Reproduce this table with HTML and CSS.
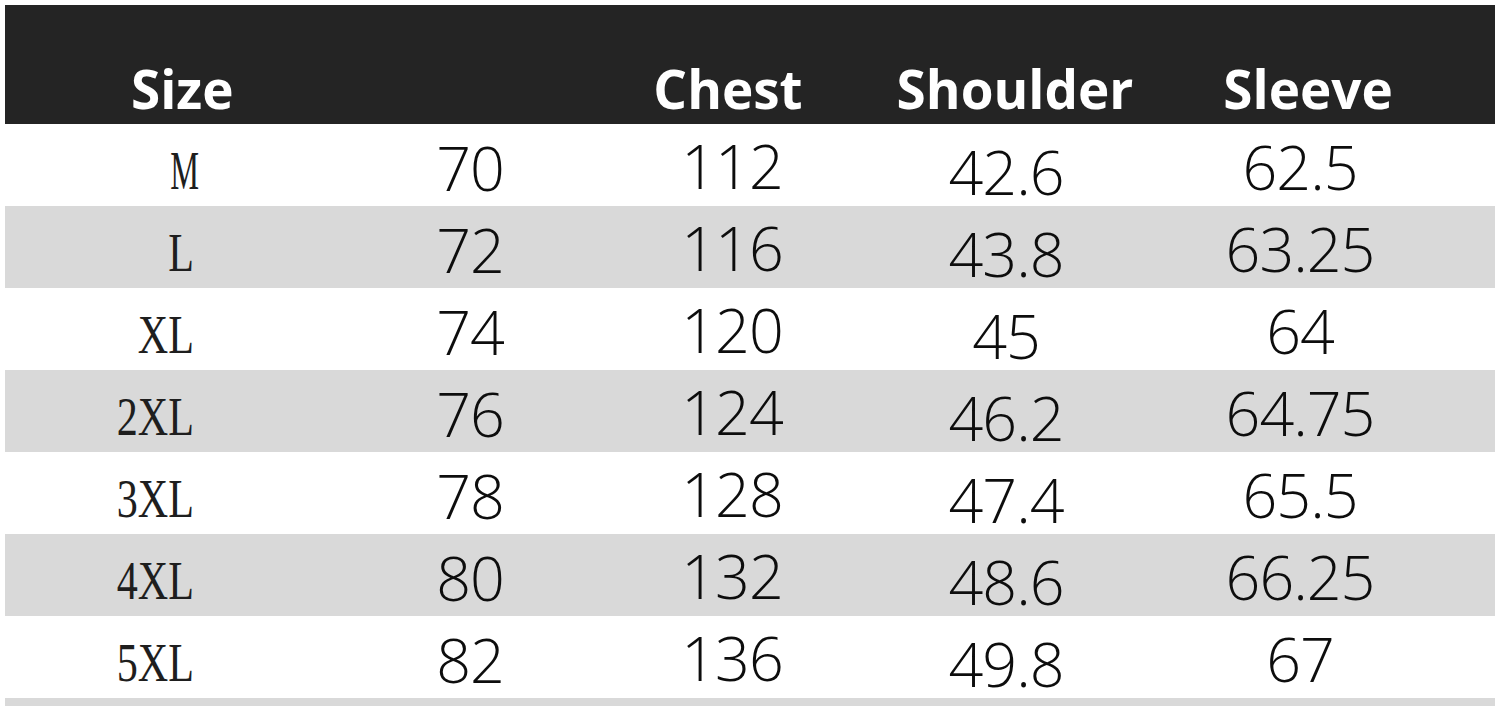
FILE: index.html
```html
<!DOCTYPE html>
<html lang="en">
<head>
<meta charset="utf-8">
<title>Size chart</title>
<link rel="stylesheet" href="styles.css">
</head>
<body>
<div class="chart">
  <div class="row head">
    <div class="h h-size">Size</div>
    <div class="h h-len"></div>
    <div class="h h-chest">Chest</div>
    <div class="h h-shoulder">Shoulder</div>
    <div class="h h-sleeve">Sleeve</div>
  </div>
  <div class="row">
    <div class="c size"><span class="narrow">M</span></div>
    <div class="c len">70</div>
    <div class="c chest">112</div>
    <div class="c shoulder">42.6</div>
    <div class="c sleeve">62.5</div>
  </div>
  <div class="row alt">
    <div class="c size"><span>L</span></div>
    <div class="c len">72</div>
    <div class="c chest">116</div>
    <div class="c shoulder">43.8</div>
    <div class="c sleeve">63.25</div>
  </div>
  <div class="row">
    <div class="c size"><span>XL</span></div>
    <div class="c len">74</div>
    <div class="c chest">120</div>
    <div class="c shoulder">45</div>
    <div class="c sleeve">64</div>
  </div>
  <div class="row alt">
    <div class="c size"><span>2XL</span></div>
    <div class="c len">76</div>
    <div class="c chest">124</div>
    <div class="c shoulder">46.2</div>
    <div class="c sleeve">64.75</div>
  </div>
  <div class="row">
    <div class="c size"><span>3XL</span></div>
    <div class="c len">78</div>
    <div class="c chest">128</div>
    <div class="c shoulder">47.4</div>
    <div class="c sleeve">65.5</div>
  </div>
  <div class="row alt">
    <div class="c size"><span>4XL</span></div>
    <div class="c len">80</div>
    <div class="c chest">132</div>
    <div class="c shoulder">48.6</div>
    <div class="c sleeve">66.25</div>
  </div>
  <div class="row">
    <div class="c size"><span>5XL</span></div>
    <div class="c len">82</div>
    <div class="c chest">136</div>
    <div class="c shoulder">49.8</div>
    <div class="c sleeve">67</div>
  </div>
  <div class="row alt tail"></div>
</div>
</body>
</html>
```

FILE: styles.css
```css
html, body {
  margin: 0;
  padding: 0;
  background: #ffffff;
  overflow: hidden;
}

.chart {
  margin: 5px 0 0 5px;
  width: 1490px;
}

.row {
  display: grid;
  grid-template-columns: 325px 280px 244px 304px 337px;
  height: 82px;
  background: #ffffff;
}

.row.alt {
  background: #d9d9d9;
}

.row.tail {
  height: 20px;
}

.row.head {
  height: 119px;
  background: #242424;
  align-items: end;
}

.h {
  font-family: "Open Sans", "Noto Sans", sans-serif;
  font-weight: 700;
  font-size: 53px;
  line-height: 53px;
  color: #ffffff;
  padding-bottom: 9px;
  text-align: center;
}

.h-size {
  text-align: left;
  padding-left: 126px;
}

.h-chest {
  padding-right: 8px;
}

.h-shoulder {
  padding-left: 18px;
}

.h-sleeve {
  padding-right: 37px;
}

.c {
  font-family: "Open Sans", "Noto Sans", sans-serif;
  font-weight: 350;
  font-size: 61px;
  line-height: normal;
  color: #0d0d0d;
  text-align: center;
  letter-spacing: -1px;
}

.c.size {
  font-family: "Liberation Serif", "Times New Roman", serif;
  font-weight: 400;
  font-size: 54px;
  line-height: 62px;
  letter-spacing: 0;
  text-align: right;
  padding-right: 136px;
  padding-top: 16px;
  color: #1e1e1e;
}

.c.size span {
  display: inline-block;
  transform: scaleX(0.78);
  transform-origin: right center;
}

.c.size span.narrow {
  transform: scaleX(0.6);
  margin-right: -5px;
}

.c.len {
  padding-top: 2px;
}

.c.chest {
  padding-top: 0;
}

.c.shoulder {
  padding-top: 6px;
}

.c.sleeve {
  padding-top: 1px;
  padding-right: 53px;
}
```
